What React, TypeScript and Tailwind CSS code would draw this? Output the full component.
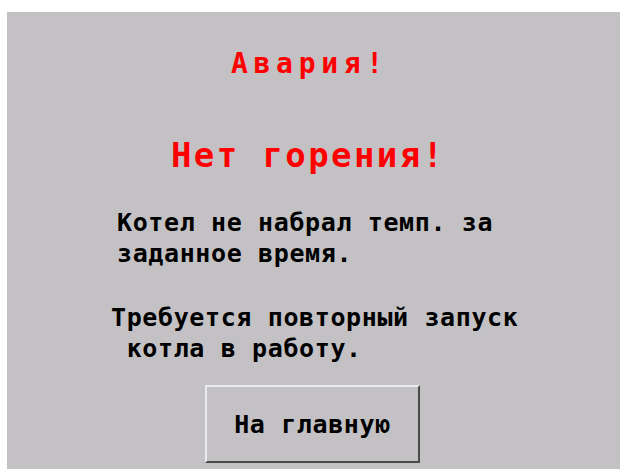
import React from "react";

// Alarm screen of the boiler panel: "no flame" fault with a return button
const mono = "font-['DejaVu_Sans_Mono','Liberation_Mono',monospace] font-bold";

export default function App() {
  return (
    <div className="w-[621px] h-[469px] bg-white pt-[12px] pl-[7px] pr-[1px] overflow-hidden">
      <div className="h-full bg-[#c3c1c4] flex flex-col items-start">
        {/* fault headers */}
        <div className={`${mono} mt-[38px] ml-[224px] text-[28px] leading-[28px] tracking-[5.7px] text-[#ff0000]`}>
          Авария!
        </div>
        <div className={`${mono} mt-[60px] ml-[164px] text-[34px] leading-[34px] tracking-[2.4px] text-[#ff0000] whitespace-pre`}>
          Нет горения!
        </div>

        {/* description */}
        <div className={`${mono} mt-[35px] ml-[110px] text-[25px] leading-[31px] tracking-[0.62px] text-black whitespace-pre`}>
          <div>Котел не набрал темп. за</div>
          <div>заданное время.</div>
        </div>
        <div className={`${mono} mt-[33px] ml-[104px] text-[25px] leading-[31px] tracking-[0.62px] text-black whitespace-pre`}>
          <div>Требуется повторный запуск</div>
          <div> котла в работу.</div>
        </div>

        <button
          className={`${mono} mt-[21px] ml-[198px] w-[215px] h-[78px] flex items-center justify-center bg-[#c3c1c4] border-t-2 border-l-2 border-t-[#ebeaec] border-l-[#ebeaec] border-r-2 border-b-2 border-r-[#4a4a4a] border-b-[#4a4a4a] text-[25px] leading-[25px] tracking-[0.62px] text-black whitespace-pre`}
        >
          На главную
        </button>
      </div>
    </div>
  );
}
